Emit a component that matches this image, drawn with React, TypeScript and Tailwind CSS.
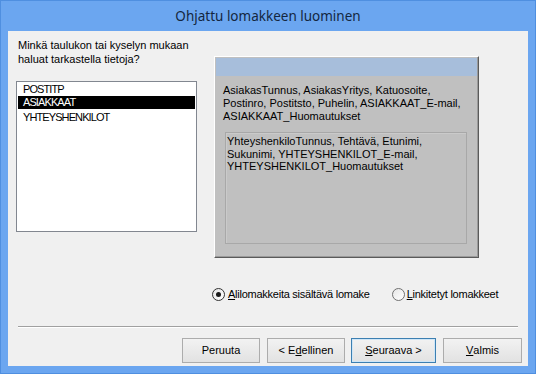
import React from 'react';

const ui = { fontFamily: '"Liberation Sans", Arial, sans-serif' };

function Radio({ checked }: { checked?: boolean }) {
  return (
    <span
      className={`flex h-[13px] w-[13px] items-center justify-center rounded-full border bg-gradient-to-br from-[#e6e6e6] to-white ${
        checked ? 'border-[#333333]' : 'border-[#707070]'
      }`}
    >
      {checked && <span className="h-[5px] w-[5px] rounded-full bg-[#1a1a1a]" />}
    </span>
  );
}

function Btn({ w, focused, children }: { w: string; focused?: boolean; children: React.ReactNode }) {
  return (
    <div
      className={`flex h-[25px] items-center justify-center border bg-gradient-to-b from-[#f2f2f2] to-[#e2e2e2] text-[11px] text-black ${w} ${
        focused ? 'border-[#3c7fb1] shadow-[inset_0_0_0_1px_#cfe6f7]' : 'border-[#acacac]'
      }`}
    >
      {children}
    </div>
  );
}

export default function App() {
  return (
    <div
      className="flex h-[374px] w-[536px] flex-col border border-[#4f8fe0] bg-[#6ba6f0]"
      style={ui}
    >
      <div
        className="flex h-[30px] items-center justify-center text-[13.5px] text-[#14263f]"
        style={{ fontFamily: '"Noto Sans", "Open Sans", sans-serif' }}
      >
        Ohjattu lomakkeen luominen
      </div>

      <div className="mx-[7px] mb-[7px] flex flex-1 flex-col bg-[#f0f0f0]">
        {/* top area */}
        <div className="flex items-start">
          <div className="ml-[8px] w-[181px]">
            <p className="pl-[2px] pt-[7px] text-[11px] leading-[14px] text-black">
              Minkä taulukon tai kyselyn mukaan
              <br />
              haluat tarkastella tietoja?
            </p>
            <div className="mt-[15px] h-[151px] border border-[#828790] bg-white px-[1px] text-[11px] tracking-[-0.9px] text-black">
              <div className="h-[14px] pl-[5px] leading-[14px]">POSTITP</div>
              <div className="h-[13px] bg-black pl-[5px] leading-[13px] text-white">ASIAKKAAT</div>
              <div className="h-[14px] pl-[5px] leading-[16px]">YHTEYSHENKILOT</div>
            </div>
          </div>

          <div className="ml-[17px] mt-[25px] flex h-[202px] w-[265px] flex-col border border-b-[#5a5a5a] border-l-white border-r-[#5a5a5a] border-t-white bg-[#c0c0c0] shadow-[inset_-1px_-1px_0_#9a9a9a]">
            <div className="mx-[1px] mt-[1px] h-[18px] bg-[#a7bedb]" />
            <p className="whitespace-nowrap pl-[8px] pt-[8px] text-[11px] leading-[13px] text-black">
              AsiakasTunnus, AsiakasYritys, Katuosoite,
              <br />
              Postinro, Postitsto, Puhelin, ASIAKKAAT_E-mail,
              <br />
              ASIAKKAAT_Huomautukset
            </p>
            <div className="ml-[10px] mt-[9px] h-[112px] w-[242px] border border-[#a8a8a8] shadow-[inset_1px_1px_0_#cacaca]">
              <p className="whitespace-nowrap pl-[1px] pt-[2px] text-[11px] leading-[12.5px] text-black">
                YhteyshenkiloTunnus, Tehtävä, Etunimi,
                <br />
                Sukunimi, YHTEYSHENKILOT_E-mail,
                <br />
                YHTEYSHENKILOT_Huomautukset
              </p>
            </div>
          </div>
        </div>

        {/* options */}
        <div className="ml-[204px] mt-[30px] flex h-[13px] items-center text-[11px] tracking-[-0.25px] text-black">
          <Radio checked />
          <span className="ml-[3px]">
            <u>A</u>lilomakkeita sisältävä lomake
          </span>
          <span className="ml-[22px]">
            <Radio />
          </span>
          <span className="ml-[2px]">
            <u>L</u>inkitetyt lomakkeet
          </span>
        </div>

        <div className="ml-[10px] mr-[10px] mt-[25px] h-[2px] border-t border-[#a0a0a0] bg-white" />

        <div className="mr-[6px] mt-[10px] flex justify-end">
          <Btn w="w-[78px]">Peruuta</Btn>
          <div className="w-[7px]" />
          <Btn w="w-[78px]">
            &lt; E<u>d</u>ellinen
          </Btn>
          <div className="w-[6px]" />
          <Btn w="w-[85px]" focused>
            <span>
              <u>S</u>euraava &gt;
            </span>
          </Btn>
          <div className="w-[7px]" />
          <Btn w="w-[79px]">
            <u>V</u>almis
          </Btn>
        </div>
      </div>
    </div>
  );
}
